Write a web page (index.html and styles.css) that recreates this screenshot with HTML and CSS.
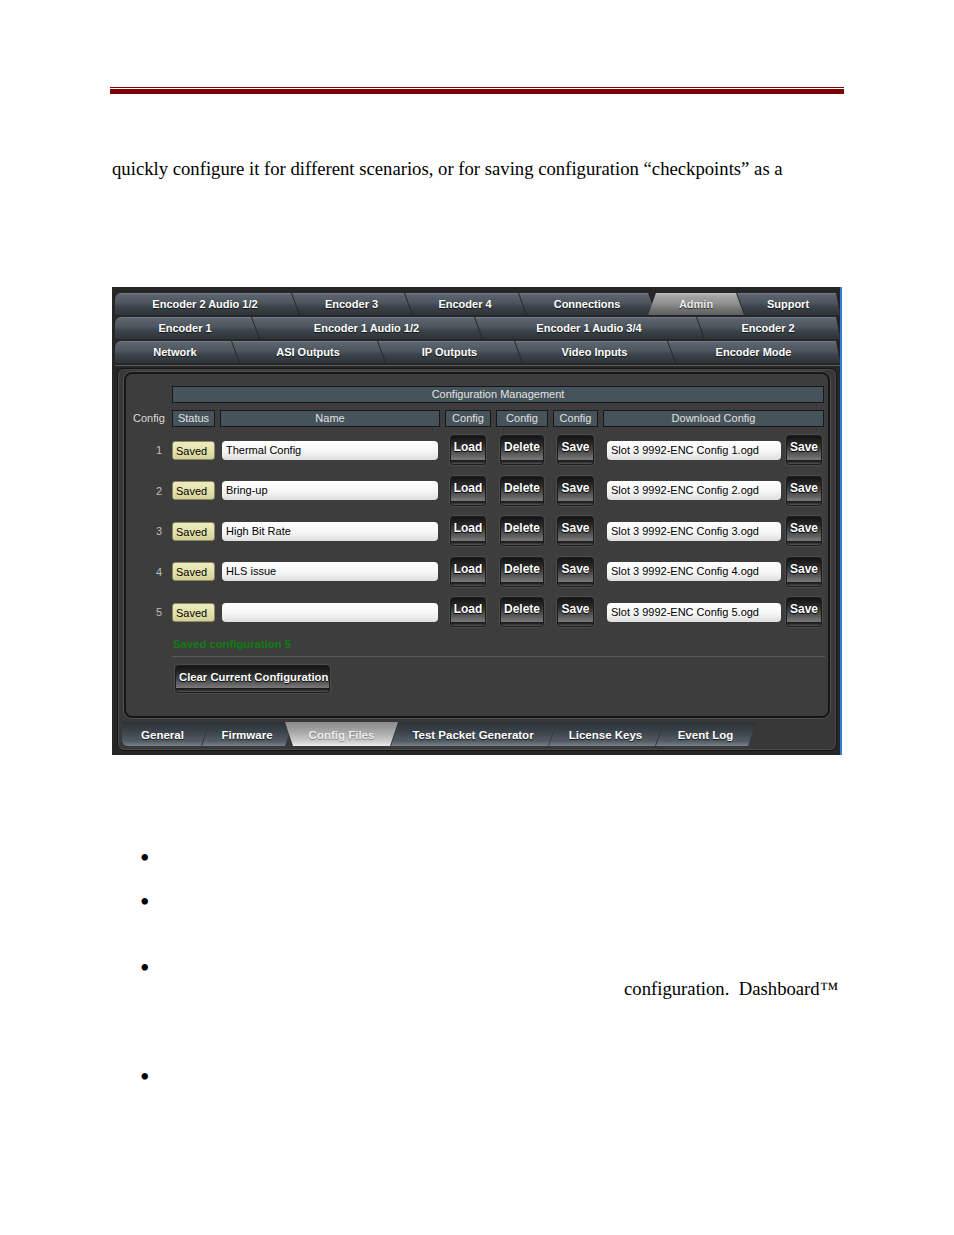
FILE: index.html
```
<!DOCTYPE html>
<html>
<head>
<meta charset="utf-8">
<title>Config Files</title>
<link rel="stylesheet" href="styles.css">
</head>
<body>
<div class="page">
  <div class="rule"><div class="rule-thin"></div><div class="rule-thick"></div></div>
  <p class="lead">quickly configure it for different scenarios, or for saving configuration “checkpoints” as a</p>

  <div class="shot">
    <div class="tabrow r1">
      <div class="tab">Encoder 2 Audio 1/2</div>
      <div class="tab">Encoder 3</div>
      <div class="tab">Encoder 4</div>
      <div class="tab">Connections</div>
      <div class="tab sel">Admin</div>
      <div class="tab">Support</div>
    </div>
    <div class="tabrow r2">
      <div class="tab">Encoder 1</div>
      <div class="tab">Encoder 1 Audio 1/2</div>
      <div class="tab">Encoder 1 Audio 3/4</div>
      <div class="tab">Encoder 2</div>
    </div>
    <div class="tabrow r3">
      <div class="tab">Network</div>
      <div class="tab">ASI Outputs</div>
      <div class="tab">IP Outputs</div>
      <div class="tab">Video Inputs</div>
      <div class="tab">Encoder Mode</div>
    </div>
    <div class="strip"></div>

    <div class="frame">
      <div class="panel">
        <div class="grid">
          <div class="bar">Configuration Management</div>
          <div class="lbl">Config</div>
          <div class="hd">Status</div>
          <div class="hd">Name</div>
          <div class="hd">Config</div>
          <div class="hd">Config</div>
          <div class="hd">Config</div>
          <div class="hd">Download Config</div>

          <div class="num">1</div>
          <div class="cell"><span class="badge">Saved</span></div>
          <div class="cell"><span class="field name">Thermal Config</span></div>
          <div class="cell c"><span class="btn"><span class="face">Load</span></span></div>
          <div class="cell c"><span class="btn"><span class="face">Delete</span></span></div>
          <div class="cell c"><span class="btn"><span class="face">Save</span></span></div>
          <div class="cell dl"><span class="field file">Slot 3 9992-ENC Config 1.ogd</span><span class="btn"><span class="face">Save</span></span></div>

          <div class="num">2</div>
          <div class="cell"><span class="badge">Saved</span></div>
          <div class="cell"><span class="field name">Bring-up</span></div>
          <div class="cell c"><span class="btn"><span class="face">Load</span></span></div>
          <div class="cell c"><span class="btn"><span class="face">Delete</span></span></div>
          <div class="cell c"><span class="btn"><span class="face">Save</span></span></div>
          <div class="cell dl"><span class="field file">Slot 3 9992-ENC Config 2.ogd</span><span class="btn"><span class="face">Save</span></span></div>

          <div class="num">3</div>
          <div class="cell"><span class="badge">Saved</span></div>
          <div class="cell"><span class="field name">High Bit Rate</span></div>
          <div class="cell c"><span class="btn"><span class="face">Load</span></span></div>
          <div class="cell c"><span class="btn"><span class="face">Delete</span></span></div>
          <div class="cell c"><span class="btn"><span class="face">Save</span></span></div>
          <div class="cell dl"><span class="field file">Slot 3 9992-ENC Config 3.ogd</span><span class="btn"><span class="face">Save</span></span></div>

          <div class="num">4</div>
          <div class="cell"><span class="badge">Saved</span></div>
          <div class="cell"><span class="field name">HLS issue</span></div>
          <div class="cell c"><span class="btn"><span class="face">Load</span></span></div>
          <div class="cell c"><span class="btn"><span class="face">Delete</span></span></div>
          <div class="cell c"><span class="btn"><span class="face">Save</span></span></div>
          <div class="cell dl"><span class="field file">Slot 3 9992-ENC Config 4.ogd</span><span class="btn"><span class="face">Save</span></span></div>

          <div class="num">5</div>
          <div class="cell"><span class="badge">Saved</span></div>
          <div class="cell"><span class="field name"></span></div>
          <div class="cell c"><span class="btn"><span class="face">Load</span></span></div>
          <div class="cell c"><span class="btn"><span class="face">Delete</span></span></div>
          <div class="cell c"><span class="btn"><span class="face">Save</span></span></div>
          <div class="cell dl"><span class="field file">Slot 3 9992-ENC Config 5.ogd</span><span class="btn"><span class="face">Save</span></span></div>
        </div>
        <div class="msg">Saved configuration 5</div>
        <div class="sep"></div>
        <div class="clear-row"><span class="btn big"><span class="face">Clear Current Configuration</span></span></div>
      </div>
      <div class="btabs">
        <div class="btab">General</div>
        <div class="btab">Firmware</div>
        <div class="btab sel">Config Files</div>
        <div class="btab">Test Packet Generator</div>
        <div class="btab">License Keys</div>
        <div class="btab">Event Log</div>
      </div>
    </div>
  </div>

  <div class="bullets">
    <div class="li b1"><span class="dot">•</span></div>
    <div class="li b2"><span class="dot">•</span></div>
    <div class="li b3"><span class="dot">•</span></div>
    <div class="cont">configuration.&nbsp; Dashboard™</div>
    <div class="li b4"><span class="dot">•</span></div>
  </div>
</div>
</body>
</html>
```

FILE: styles.css
```
* { box-sizing: border-box; }

body {
  margin: 0;
  background: #ffffff;
  color: #000000;
  font-family: "Liberation Serif", "Times New Roman", serif;
}

.page {
  width: 954px;
  padding-top: 87px;
}

/* red header rule */
.rule { margin-left: 110px; width: 734px; }
.rule-thin { height: 1px; background: #7c0a0a; }
.rule-thick { height: 5px; margin-top: 1px; background: #800000; }

.lead {
  margin: 64px 0 0 112px;
  font-size: 18.7px;
  line-height: 22px;
  white-space: nowrap;
}

/* screenshot */
.shot {
  margin: 107px 0 0 112px;
  width: 730px;
  height: 468px;
  background: #262626;
  border-right: 2px solid #2d84d9;
  padding-top: 6px;
  font-family: "Liberation Sans", Arial, sans-serif;
  overflow: hidden;
}

.tabrow {
  display: flex;
  margin-left: 3px;
  width: 725px;
  height: 22px;
  margin-bottom: 2px;
}

.tab {
  flex: none;
  height: 22px;
  display: flex;
  align-items: center;
  justify-content: center;
  margin-right: -8px;
  color: #ffffff;
  font-weight: bold;
  font-size: 11px;
  text-shadow: 0 1px 1px rgba(0, 0, 0, 0.7);
  background: linear-gradient(#747d85 0, #5b646c 2px, #4d565e 45%, #3c434a 62%, #2d3338 100%);
  clip-path: polygon(1px 0, calc(100% - 8px) 0, 100% 100%, 9px 100%);
}
.tab:first-child {
  clip-path: polygon(0 0, calc(100% - 8px) 0, 100% 100%, 0 100%);
  border-top-left-radius: 6px;
  padding-right: 4px;
}
.tab:last-child {
  margin-right: 0;
  clip-path: polygon(1px 0, calc(100% - 4px) 0, 100% 100%, 9px 100%);
}
.tab.sel {
  position: relative;
  z-index: 1;
  color: #ececec;
  background: linear-gradient(#bdbdbd 0, #a4a4a4 3px, #929292 45%, #777777 70%, #5e5e5e 100%);
  clip-path: polygon(8px 0, calc(100% - 8px) 0, 100% 100%, 0 100%);
}

.r1 .tab:nth-child(1) { width: 184px; }
.r1 .tab:nth-child(2) { width: 121px; }
.r1 .tab:nth-child(3) { width: 122px; }
.r1 .tab:nth-child(4) { width: 138px; }
.r1 .tab:nth-child(5) { width: 96px; }
.r1 .tab:nth-child(6) { width: 104px; }

.r2 .tab:nth-child(1) { width: 144px; }
.r2 .tab:nth-child(2) { width: 231px; }
.r2 .tab:nth-child(3) { width: 230px; }
.r2 .tab:nth-child(4) { width: 144px; }

.r3 .tab:nth-child(1) { width: 124px; }
.r3 .tab:nth-child(2) { width: 154px; }
.r3 .tab:nth-child(3) { width: 145px; }
.r3 .tab:nth-child(4) { width: 161px; }
.r3 .tab:nth-child(5) { width: 173px; }

.strip {
  height: 1px;
  width: 725px;
  margin: 1px 0 0 3px;
  background: #5a5a5a;
}

.frame {
  margin: 2px 0 0 5px;
  width: 720px;
  height: 383px;
  border: 1px solid #141414;
  border-radius: 7px;
  background: #383838;
  box-shadow: inset 0 0 0 1px #4a4a4a;
  padding: 3px 6px 0 6px;
}

.panel {
  height: 346px;
  border: 2px solid #161616;
  border-radius: 8px;
  background: #3d3d3d;
  box-shadow: 0 0 0 1px #505050;
  padding-top: 12px;
}

.grid {
  margin-left: 4px;
  display: grid;
  grid-template-columns: 37px 43px 220px 46px 52px 45px 221px;
  grid-template-rows: 24px 20px repeat(5, 40.5px);
  column-gap: 5px;
  font-size: 11px;
}

.bar {
  grid-column: 2 / -1;
  align-self: start;
  height: 17px;
  line-height: 15px;
  text-align: center;
  color: #e2e2e2;
  background: #46535b;
  border: 1px solid #15191c;
}

.lbl {
  align-self: start;
  line-height: 17px;
  padding-left: 3px;
  color: #dadada;
}

.hd {
  align-self: start;
  height: 17px;
  line-height: 15px;
  text-align: center;
  color: #e0e0e0;
  background: #46535b;
  border: 1px solid #15191c;
  white-space: nowrap;
}

.num {
  align-self: center;
  text-align: right;
  padding-right: 5px;
  color: #bdbdbd;
}

.cell {
  display: flex;
  align-items: center;
}
.cell.c { justify-content: center; }

.badge {
  width: 43px;
  height: 19px;
  line-height: 18px;
  padding-left: 3px;
  border-radius: 3px;
  border: 1px solid #8b8a63;
  background: linear-gradient(#eeecbf, #e2e0a8 60%, #d2d096);
  color: #000000;
}

.field {
  height: 19px;
  line-height: 19px;
  padding-left: 4px;
  border-radius: 4px;
  background: linear-gradient(#ffffff, #f6f6f6 55%, #dedede);
  color: #000000;
  white-space: nowrap;
  overflow: hidden;
}
.field.name { width: 216px; margin-left: 2px; }
.field.file { width: 174px; margin-left: 4px; margin-right: 5px; }

.btn {
  display: flex;
  flex-direction: column;
  height: 30px;
  padding: 1px;
  border-radius: 4px;
  background: #1d1d1d;
  box-shadow: 0 0 0 1px #4b4b4b;
}
.btn::after {
  content: "";
  height: 4px;
  border-radius: 0 0 3px 3px;
  background: linear-gradient(#161616, #2a2a2a 50%, #5a5a5a);
}
.face {
  display: block;
  height: 24px;
  padding: 4px 3px 0;
  border-radius: 3px 3px 0 0;
  background: linear-gradient(#141414, #2a2a2a 35%, #5a5a5a 75%, #7a7a7a);
  color: #ffffff;
  font-weight: bold;
  font-size: 12px;
  line-height: 15px;
  text-shadow: 0 1px 1px #000000, 1px 0 0 rgba(0, 0, 0, 0.5);
  white-space: nowrap;
}

.msg {
  margin: 4px 0 0 47px;
  line-height: 14px;
  font-size: 11.3px;
  font-weight: bold;
  color: #0f7d0f;
}

.sep {
  margin: 5px 0 0 46px;
  width: 653px;
  height: 1px;
  background: #595959;
}

.clear-row {
  margin: 8px 0 0 49px;
  display: flex;
}
.btn.big { height: 28px; width: 155px; }
.btn.big .face {
  height: 22px;
  font-size: 11.3px;
  padding: 4px 3px 0;
}

.btabs {
  display: flex;
  margin: 4px 0 0 -2px;
  height: 24px;
}
.btab {
  flex: none;
  height: 24px;
  display: flex;
  align-items: center;
  justify-content: center;
  padding-top: 1px;
  margin-right: -8px;
  color: #ffffff;
  font-weight: bold;
  font-size: 11.5px;
  text-shadow: 0 1px 1px rgba(0, 0, 0, 0.7);
  background: linear-gradient(#2b3136 0, #3b434a 40%, #535c64 80%, #78818a 100%);
  clip-path: polygon(9px 0, 100% 0, calc(100% - 8px) 100%, 1px 100%);
}
.btab:first-child {
  clip-path: polygon(0 0, 100% 0, calc(100% - 8px) 100%, 0 100%);
  border-bottom-left-radius: 6px;
  padding-right: 6px;
}
.btab.sel {
  position: relative;
  z-index: 1;
  color: #ececec;
  text-shadow: 0 1px 1px rgba(0, 0, 0, 0.35);
  background: linear-gradient(#8a8a8a 0, #a6a6a6 40%, #d2d2d2 85%, #eeeeee 100%);
  clip-path: polygon(0 0, 100% 0, calc(100% - 8px) 100%, 8px 100%);
}
.btab:nth-child(1) { width: 87px; }
.btab:nth-child(2) { width: 92px; }
.btab:nth-child(3) { width: 113px; }
.btab:nth-child(4) { width: 166px; }
.btab:nth-child(5) { width: 115px; }
.btab:nth-child(6) { width: 101px; }

/* bullets below */
.bullets {
  margin-top: 91px;
  font-size: 18.7px;
  line-height: 22px;
}
.li { height: 22px; padding: 1px 0 0 140px; }
.dot { font-size: 27px; line-height: 22px; }
.b2 { margin-top: 22px; }
.b3 { margin-top: 44px; }
.b4 { margin-top: 65px; }
.cont {
  width: 838px;
  text-align: right;
  white-space: nowrap;
}
```
